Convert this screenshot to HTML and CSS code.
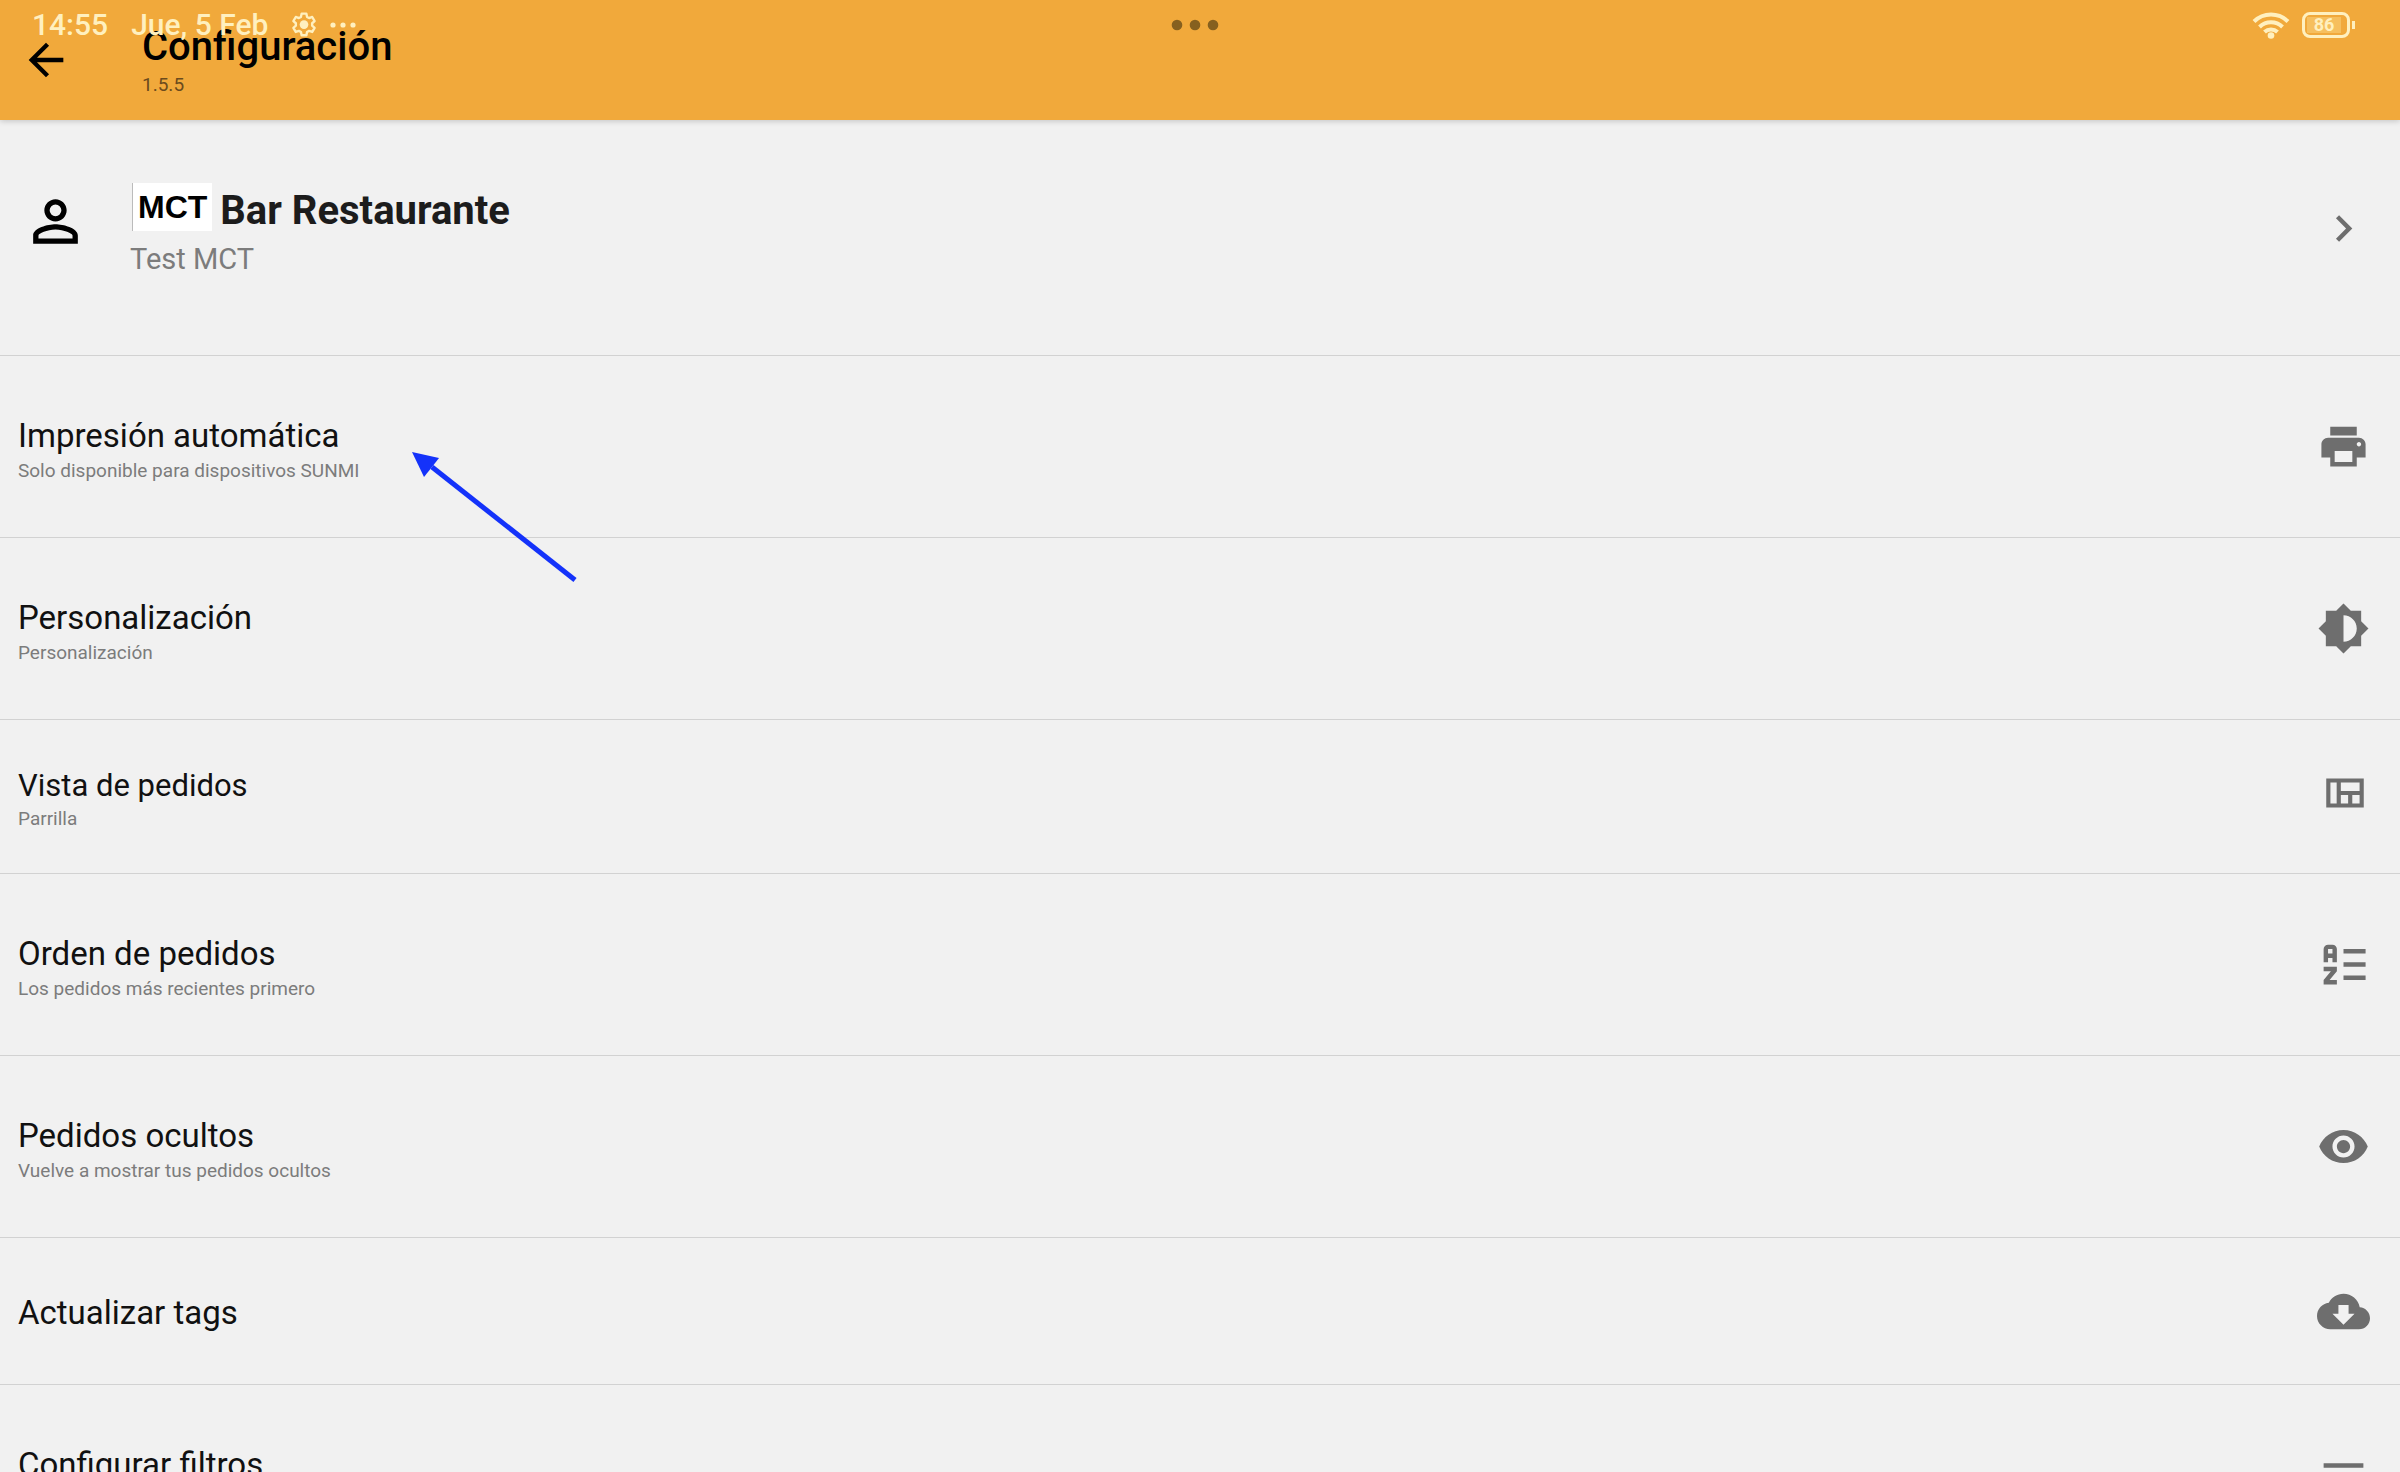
FILE: index.html
```html
<!DOCTYPE html>
<html lang="es">
<head>
<meta charset="UTF-8">
<meta name="viewport" content="width=device-width, initial-scale=1">
<title>Configuración</title>
<link rel="stylesheet" href="styles.css">
</head>
<body>

<!-- CABECERA -->
<header class="appbar">
  <button class="back" type="button" aria-label="Volver">
    <svg viewBox="0 0 24 24"><path d="M20 11H7.83l5.59-5.59L12 4l-8 8 8 8 1.41-1.41L7.83 13H20z"/></svg>
  </button>
  <div class="appbar-text">
    <h1>Configuración</h1>
    <p>1.5.5</p>
  </div>

  <!-- barra de estado, encima de la cabecera -->
  <div class="status">
    <div class="status-left">
      <span>14:55</span>
      <span>Jue, 5 Feb</span>
      <svg class="gear" viewBox="0 0 24 24"><path d="M9.8 1.5h4.4l.6 3 1.9 1.1 2.9-1 2.2 3.8-2.3 2v2.2l2.3 2-2.2 3.8-2.9-1-1.9 1.1-.6 3H9.8l-.6-3-1.9-1.1-2.9 1-2.2-3.8 2.3-2v-2.2l-2.3-2 2.2-3.8 2.9 1 1.9-1.1z" fill="none" stroke="currentColor" stroke-width="2.2" stroke-linejoin="round"/><circle cx="12" cy="11.6" r="4"/></svg>
      <svg class="more" viewBox="0 0 28 8"><circle cx="4" cy="4" r="2.6"/><circle cx="14" cy="4" r="2.6"/><circle cx="24" cy="4" r="2.6"/></svg>
    </div>
    <svg class="handle" viewBox="0 0 48 12"><circle cx="6" cy="6" r="5.3"/><circle cx="24" cy="6" r="5.3"/><circle cx="42" cy="6" r="5.3"/></svg>
    <div class="status-right">
      <svg class="wifi" viewBox="0 0 38 30"><g fill="none" stroke="currentColor" stroke-width="4"><path d="M2 11.5a24 24 0 0 1 34 0"/><path d="M7.5 17a16.500 16.500 0 0 1 23 0"/><path d="M12.500 22a9.500 9.500 0 0 1 13 0"/></g><circle cx="19" cy="25.500" r="3.300"/></svg>
      <div class="battery"><span>86</span></div>
    </div>
  </div>
</header>

<main>
  <a class="row profile" href="#perfil">
    <svg class="person" viewBox="0 0 24 24"><path d="M12 5.900a2.100 2.100 0 1 1 0 4.200 2.100 2.100 0 0 1 0-4.200m0 9c2.970 0 6.100 1.460 6.100 2.100v1.100H5.900V17c0-.640 3.130-2.100 6.100-2.100M12 4C9.790 4 8 5.790 8 8s1.790 4 4 4 4-1.790 4-4-1.790-4-4-4zm0 9c-2.670 0-8 1.340-8 4v3h16v-3c0-2.660-5.330-4-8-4z"/></svg>
    <div class="text">
      <h2><span class="tag">MCT</span>Bar Restaurante</h2>
      <p>Test MCT</p>
    </div>
    <svg class="icon" viewBox="0 0 24 24"><path d="M10 6 8.590 7.410 13.170 12l-4.580 4.590L10 18l6-6z"/></svg>
  </a>

  <a class="row" href="#impresion">
    <div class="text">
      <h2>Impresión automática</h2>
      <p>Solo disponible para dispositivos SUNMI</p>
    </div>
    <svg class="icon" viewBox="0 0 24 24"><path d="M19 8H5c-1.660 0-3 1.340-3 3v6h4v4h12v-4h4v-6c0-1.660-1.340-3-3-3zm-3 11H8v-5h8v5zm3-7c-.550 0-1-.450-1-1s.450-1 1-1 1 .450 1 1-.450 1-1 1zm-1-9H6v4h12V3z"/></svg>
  </a>

  <a class="row" href="#personalizacion">
    <div class="text">
      <h2>Personalización</h2>
      <p>Personalización</p>
    </div>
    <svg class="icon" viewBox="0 0 24 24"><path d="M20 15.310 23.310 12 20 8.690V4h-4.690L12 .690 8.690 4H4v4.690L.690 12 4 15.310V20h4.690L12 23.310 15.310 20H20v-4.690zM12 18V6c3.310 0 6 2.690 6 6s-2.690 6-6 6z"/></svg>
  </a>

  <a class="row small" href="#vista">
    <div class="text">
      <h2>Vista de pedidos</h2>
      <p>Parrilla</p>
    </div>
    <svg class="icon" viewBox="0 0 24 24"><path fill-rule="evenodd" d="M3 5h18v14H3zM5 7v10h3V7zM10 7v4h9V7zM10 13v4h3.500v-4zM15.500 13v4H19v-4z"/></svg>
  </a>

  <a class="row" href="#orden">
    <div class="text">
      <h2>Orden de pedidos</h2>
      <p>Los pedidos más recientes primero</p>
    </div>
    <svg class="icon" viewBox="0 0 24 24"><path fill-rule="evenodd" d="M5 3h2a2 2 0 0 1 2 2v6H7V9H5v2H3V5a2 2 0 0 1 2-2zM5 5v2h2V5zM3 13h6v2l-3.300 4H9v2H3v-2l3.300-4H3zM12 5h10v2H12zM12 11h10v2H12zM12 17h10v2H12z"/></svg>
  </a>

  <a class="row" href="#ocultos">
    <div class="text">
      <h2>Pedidos ocultos</h2>
      <p>Vuelve a mostrar tus pedidos ocultos</p>
    </div>
    <svg class="icon" viewBox="0 0 24 24"><path d="M12 4.500C7 4.500 2.730 7.610 1 12c1.730 4.390 6 7.500 11 7.500s9.270-3.110 11-7.500c-1.730-4.390-6-7.500-11-7.500zM12 17c-2.760 0-5-2.240-5-5s2.240-5 5-5 5 2.240 5 5-2.240 5-5 5zm0-8c-1.660 0-3 1.340-3 3s1.340 3 3 3 3-1.340 3-3-1.340-3-3-3z"/></svg>
  </a>

  <a class="row single" href="#tags">
    <div class="text">
      <h2>Actualizar tags</h2>
    </div>
    <svg class="icon" viewBox="0 0 24 24"><path d="M19.350 10.040C18.670 6.590 15.640 4 12 4 9.110 4 6.600 5.640 5.350 8.040 2.340 8.360 0 10.910 0 14c0 3.310 2.690 6 6 6h13c2.760 0 5-2.240 5-5 0-2.640-2.050-4.780-4.650-4.960zM17 13l-5 5-5-5h2.700V9h4.600v4z"/></svg>
  </a>

  <a class="row" href="#filtros">
    <div class="text">
      <h2>Configurar filtros</h2>
    </div>
    <svg class="icon" viewBox="0 0 24 24"><path d="M10 18h4v-2h-4v2zM3 6v2h18V6H3zm3 7h12v-2H6v2z"/></svg>
  </a>
</main>

<!-- flecha que señala la impresión automática -->
<svg class="pointer" viewBox="0 0 170 136"><path d="M20 15 163 128" stroke="#1432fa" stroke-width="5"/><path d="M0 0 27 6 20 15 12 25z" fill="#1432fa"/></svg>

</body>
</html>
```
FILE: styles.css
```css
*{
  box-sizing:border-box;
}

body{
  margin:0;
  height:100vh;
  overflow:hidden;
  position:relative;
  background:#f1f1f1;
  color:#111;
  font-family:Roboto, "Noto Sans", sans-serif;
}

h1, h2, p{
  margin:0;
  font-weight:400;
}

svg{
  display:block;
  fill:currentColor;
  flex:none;
}

/* CABECERA */
.appbar{
  position:relative;
  z-index:1;
  display:flex;
  align-items:center;
  height:120px;
  padding:0 20px;
  background:#f1a93b;
  box-shadow:0 1px 6px rgba(0,0,0,.2);
}

.back{
  width:52px;
  height:52px;
  padding:0;
  border:0;
  background:none;
  color:#000;
  cursor:pointer;
}

.appbar-text{
  margin-left:70px;
  padding-top:4px;
}

.appbar-text h1{
  font-size:40px;
  line-height:46px;
  font-weight:500;
  color:#000;
}

.appbar-text p{
  font-size:19px;
  line-height:30px;
  color:#6b4b1d;
}

/* BARRA DE ESTADO */
.status{
  position:absolute;
  top:0;
  left:0;
  right:0;
  height:50px;
  padding:0 42px 0 32px;
  display:grid;
  grid-template-columns:1fr auto 1fr;
  align-items:center;
  color:#fff0bf;
}

.status-left,
.status-right{
  display:flex;
  align-items:center;
}

.status-left{
  font-size:30px;
  line-height:50px;
  font-weight:500;
}

.status-left span{
  margin-right:23px;
}

.gear{
  width:26px;
  height:26px;
}

.more{
  width:28px;
  height:8px;
  margin-left:12px;
}

.handle{
  width:48px;
  height:12px;
  color:#86601f;
}

.status-right{
  justify-content:flex-end;
  padding-right:8px;
}

.wifi{
  width:38px;
  height:30px;
}

.battery{
  position:relative;
  width:48px;
  height:26px;
  margin-left:12px;
  padding:2px;
  border:3px solid #fff0bf;
  border-radius:8px;
  font-size:18px;
  line-height:16px;
  font-weight:700;
  text-align:center;
}

.battery span{
  display:block;
  width:34px;
  background:#f6bf5e;
}

.battery::after{
  content:"";
  position:absolute;
  top:6px;
  right:-8px;
  width:3px;
  height:8px;
  background:#fff0bf;
}

/* FILAS */
.row{
  display:flex;
  align-items:center;
  justify-content:space-between;
  padding:0 30px 0 18px;
  border-bottom:1px solid #d2d2d2;
  color:inherit;
  text-decoration:none;
}

.row .text{
  padding:60px 0 51px;
}

.row h2{
  font-size:33px;
  line-height:40px;
}

.row p{
  font-size:19px;
  line-height:30px;
  color:#7c7c7c;
}

/* la última fila no tiene subtítulo visible pero guarda el mismo alto */
.row:last-child{
  min-height:182px;
  border-bottom:0;
}

.row:last-child .text{
  align-self:flex-start;
}

.icon{
  width:53px;
  height:53px;
  color:#6e6e6e;
}

.row.small .text{
  padding:46px 0 41px;
}

.row.small h2{
  font-size:31px;
}

.row.small p{
  line-height:26px;
}

.row.small .icon{
  width:50px;
  height:50px;
  margin-bottom:8px;
}

.row.single .text{
  padding:55px 0 51px;
}

/* PERFIL */
.row.profile{
  padding-left:22px;
  padding-bottom:18px;
}

.person{
  width:67px;
  height:67px;
  margin-bottom:15px;
  color:#000;
}

.row.profile .text{
  flex:1;
  margin-left:41px;
  padding:63px 0 58px;
}

.row.profile h2{
  display:flex;
  align-items:flex-start;
  font-size:40px;
  line-height:56px;
  font-weight:700;
  color:#1c1c1c;
}

.row.profile p{
  font-size:29px;
  line-height:40px;
}

.tag{
  height:48px;
  margin:0 8px 0 2px;
  padding:0 5px;
  border-left:1px solid #bbb;
  background:#fff;
  color:#000;
  font:bold 32px/48px "Liberation Sans", Arial, sans-serif;
}

/* FLECHA */
.pointer{
  position:absolute;
  top:452px;
  left:412px;
  width:170px;
  height:136px;
}
```
